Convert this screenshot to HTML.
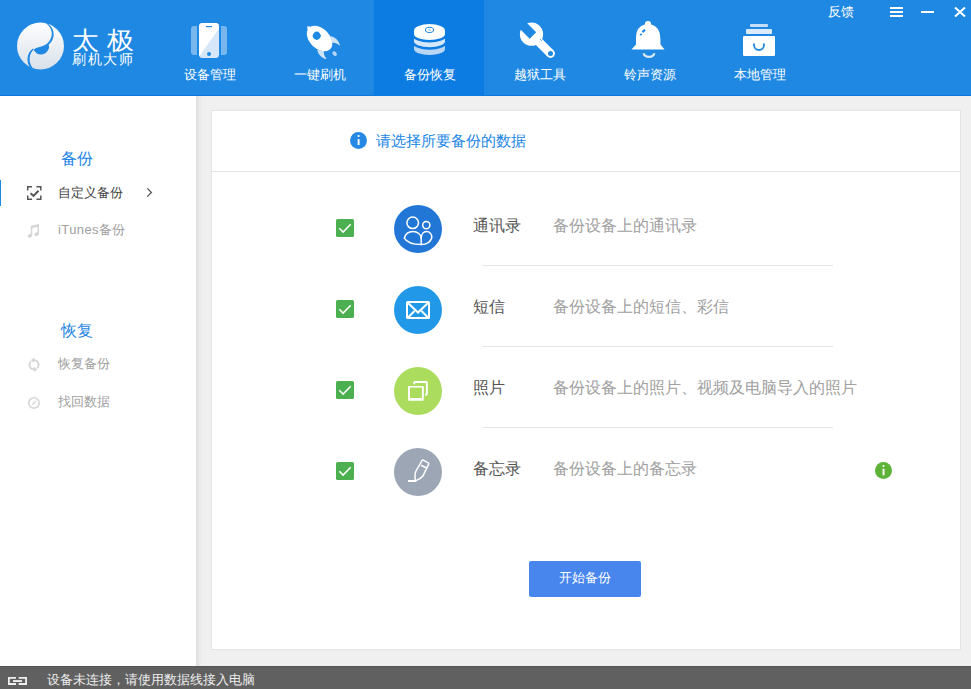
<!DOCTYPE html>
<html><head><meta charset="utf-8">
<style>
*{margin:0;padding:0;box-sizing:border-box}
html,body{width:971px;height:689px;overflow:hidden;background:#f0f0f0;font-family:"Liberation Sans",sans-serif}
.abs{position:absolute}
#hdr{position:absolute;left:0;top:0;width:971px;height:96px;background:#1e88e2;border-bottom:1px solid #0b7adc}
.tab{position:absolute;top:0;width:110px;height:95px}
.tab.act{background:#0c7ce2}
.tab .lbl{position:absolute;left:1px;width:110px;top:67px;text-align:center;color:#fff;font-size:13px;line-height:16px;white-space:nowrap}
.tab svg{position:absolute;left:0;top:0}
#side{position:absolute;left:0;top:96px;width:196px;height:570px;background:#fff}
#shadow{position:absolute;left:196px;top:96px;width:6px;height:570px;background:linear-gradient(to right,#dedede,#f0f0f0)}
#card{position:absolute;left:211px;top:110px;width:750px;height:540px;background:#fff;border:1px solid #e4e4e4}
.txt{position:absolute;white-space:nowrap;line-height:1}
#foot{position:absolute;left:0;top:666px;width:971px;height:23px;background:#606060;border-top:1px solid #555}
</style></head><body>
<div id="hdr">
  <!-- logo -->
  <svg class="abs" style="left:0;top:0" width="150" height="95" viewBox="0 0 150 95">
    <defs>
      <linearGradient id="lg" x1="0" y1="0" x2="0" y2="1">
        <stop offset="0" stop-color="#ffffff"/><stop offset="1" stop-color="#d8e0ea"/>
      </linearGradient>
    </defs>
    <circle cx="40.5" cy="46" r="23.5" fill="url(#lg)"/>
    <path d="M46.8 23 C51.5 25.5 54 30.5 53.6 35.5 C53.3 39.5 51.3 42.5 48.8 44.5 A8 8 0 0 1 33.2 48.5 C28.5 51.5 27.2 56.5 27.6 61 C28 64.5 29.5 67.3 31.7 69.2 L33.8 69.2 C31 66.5 29.6 63 29.6 59 C29.6 54.5 31.5 50.8 35 48.8 C38.5 46.8 44 46.5 47.2 43.5 C50 41 51.8 37.5 51.8 33.8 C51.8 29.5 49.5 25.5 45.5 23 Z" fill="#1e88e2"/>
  </svg>
  <div class="txt" style="left:72px;top:27.5px;color:#fff;font-size:25px;letter-spacing:7px;font-weight:300;transform:scaleX(1.08);transform-origin:0 0">太极</div>
  <div class="txt" style="left:72px;top:52px;color:#fff;font-size:14px;letter-spacing:1.6px">刷机大师</div>

  <div class="tab" style="left:154px"><div class="lbl">设备管理</div></div>
  <div class="tab" style="left:264px"><div class="lbl">一键刷机</div></div>
  <div class="tab act" style="left:374px"><div class="lbl">备份恢复</div></div>
  <div class="tab" style="left:484px"><div class="lbl">越狱工具</div></div>
  <div class="tab" style="left:594px"><div class="lbl">铃声资源</div></div>
  <div class="tab" style="left:704px"><div class="lbl">本地管理</div></div>

  <!-- header icons -->
  <svg class="abs" style="left:0;top:0" width="971" height="95" viewBox="0 0 971 95">
    <!-- phone -->
    <path d="M194 26 h3 v29 h-3 a3 3 0 0 1 -3 -3 v-23 a3 3 0 0 1 3 -3z" fill="#fff" fill-opacity="0.4"/>
    <path d="M221 26 h3 a3 3 0 0 1 3 3 v23 a3 3 0 0 1 -3 3 h-3z" fill="#fff" fill-opacity="0.4"/>
    <rect x="199" y="23" width="20" height="35" rx="3.5" fill="#d6e7f9"/>
    <path d="M202.5 23 h13 a3.5 3.5 0 0 1 3.5 3.5 v2 L199.5 56 a3.5 3.5 0 0 1 -0.5 -1.5 v-28 a3.5 3.5 0 0 1 3.5 -3.5z" fill="#fff"/>
    <rect x="206" y="26" width="6" height="1.2" fill="#1e88e2"/>
    <circle cx="209" cy="54" r="2" fill="#1e88e2"/>
    <!-- rocket -->
    <g transform="translate(321,40) rotate(-45)">
      <path d="M9.3 4 C12 7 12.5 13 9.5 17.5 C9 14 8 11.5 6 10 Z" fill="#cfe3f8"/>
      <path d="M-9.3 4 C-12 7 -12.5 13 -9.5 17.5 C-9 14 -8 11.5 -6 10 Z" fill="#cfe3f8"/>
      <ellipse cx="0" cy="19.3" rx="1.8" ry="2.6" fill="#b9d6f5"/>
      <ellipse cx="0" cy="-2" rx="10" ry="15" fill="#fff"/><path d="M0 -19.6 L2.4 -16.5 L-2.4 -16.5 Z" fill="#fff"/>
      <circle cx="0" cy="-6" r="3.9" fill="#1e88e2"/>
    </g>
    <!-- database -->
    <g stroke="#0c7ce2" stroke-width="5" paint-order="stroke" stroke-linejoin="round">
      <path d="M414 43 A15.5 6.4 0 0 1 445 43 V49 A15.5 6 0 0 1 414 49 Z" fill="#b9d6f5" stroke="none"/>
      <path d="M414 35.5 A15.5 6.4 0 0 1 445 35.5 V41.2 A15.5 6 0 0 1 414 41.2 Z" fill="#d5e7fa"/>
      <path d="M414 30.5 A15.5 6.4 0 0 1 445 30.5 V34 A15.5 6 0 0 1 414 34 Z" fill="#fff"/>
    </g>
    <ellipse cx="429.5" cy="29.9" rx="4.1" ry="2.6" fill="none" stroke="#0c7ce2" stroke-width="1"/>
    <path d="M428.5 29.3 L430.5 30.5" stroke="#0c7ce2" stroke-width="0.7"/>
    <!-- wrench -->
    <g fill="#fff">
      <circle cx="531.5" cy="34.2" r="11.6"/>
      <path d="M534.6 31.4 L553.6 50.4 L547.4 56.6 L528.4 37.6 Z"/>
      <circle cx="550.5" cy="53.5" r="4.4"/>
    </g>
    <path d="M536.2 32.3 L529.7 38.8 L515.5 24.6 L522 18.1 Z" fill="#1e88e2"/>
    <circle cx="550.5" cy="53.5" r="2.5" fill="#1e88e2"/>
    <path d="M540.2 39.2 L541.8 40.8" stroke="#1e88e2" stroke-width="0.8"/>
    <!-- bell -->
    <g fill="#fff">
      <ellipse cx="648" cy="24.3" rx="3.1" ry="3.3"/>
      <path d="M636 44.5 C636 36 636 31 639 28 C642 25 645 24 648 24 C651 24 654 25 657 28 C660 31 660.5 36 660.5 44.5 L664.5 49.5 L631.5 49.5 Z"/>
    </g>
    <path d="M641.6 31.3 L644.2 29 L645.8 30.6 L643.2 33 Z M639.5 34.5 L641 33.2 L642.2 34.5 L640.7 35.8 Z" fill="#1e88e2"/>
    <path d="M643.8 53.3 a5.2 3.6 0 0 0 10.4 0" fill="none" stroke="#d9e9fa" stroke-width="2.4"/>
    <!-- storage -->
    <rect x="750" y="24" width="18" height="3" rx="1" fill="#c6ddf6"/>
    <rect x="746" y="29" width="26" height="5" rx="1" fill="#dcebfb"/>
    <rect x="743" y="36" width="32" height="20" rx="1.2" fill="#fff"/>
    <path d="M754 43.5 v1.5 a5 5 0 0 0 10 0 v-1.5" fill="none" stroke="#1e88e2" stroke-width="1.8"/>
    <!-- window controls -->
    <rect x="890" y="7" width="13" height="2" fill="#fff"/>
    <rect x="890" y="11" width="13" height="2" fill="#fff"/>
    <rect x="890" y="15" width="13" height="2" fill="#fff"/>
    <rect x="921" y="11" width="13" height="2" fill="#fff"/>
    <path d="M955 7.5 L965 16.5 M965 7.5 L955 16.5" stroke="#fff" stroke-width="2"/>
  </svg>
  <div class="txt" style="left:828px;top:5px;color:#fff;font-size:13px">反馈</div>
</div>

<div id="side">
  <div class="abs" style="left:0;top:84px;width:1px;height:26px;background:#1e88e2"></div>
</div>
<div id="shadow"></div>
<div class="txt" style="left:61px;top:151px;color:#1c84e6;font-size:16px">备份</div>
<div class="txt" style="left:58px;top:186px;color:#444;font-size:13px">自定义备份</div>
<div class="txt" style="left:58px;top:223px;color:#a0a0a0;font-size:13px;letter-spacing:0.4px">iTunes备份</div>
<div class="txt" style="left:61px;top:323px;color:#1c84e6;font-size:16px">恢复</div>
<div class="txt" style="left:58px;top:357px;color:#a0a0a0;font-size:13px">恢复备份</div>
<div class="txt" style="left:58px;top:395px;color:#a0a0a0;font-size:13px">找回数据</div>
<svg class="abs" style="left:0;top:170px" width="196" height="250" viewBox="0 170 196 250">
  <path d="M27.7 190.5 v-3.8 h4.3 M36.5 186.7 h4.3 v3.8 M40.8 195.5 v3.8 h-4.3 M32 199.3 h-4.3 v-3.8" fill="none" stroke="#555" stroke-width="1.5"/>
  <path d="M30.6 193.2 L33.5 195.9 L38.5 190.8" fill="none" stroke="#555" stroke-width="2"/>
  <path d="M147.3 188.4 L151.4 192.5 L147.3 196.6" fill="none" stroke="#555" stroke-width="1.3"/>
  <!-- music note -->
  <path d="M30.8 225.8 L39 224 V226.6 L30.8 228.4 Z" fill="#d6d6d6"/>
  <rect x="30.8" y="226" width="1.5" height="9.8" fill="#d6d6d6"/>
  <rect x="37.5" y="224.5" width="1.5" height="9.6" fill="#d6d6d6"/>
  <ellipse cx="29.9" cy="235.8" rx="2.3" ry="1.8" transform="rotate(-25 29.9 235.8)" fill="#d6d6d6"/>
  <ellipse cx="36.6" cy="234.2" rx="2.3" ry="1.8" transform="rotate(-25 36.6 234.2)" fill="#d6d6d6"/>
  <!-- refresh -->
  <path d="M34 360.2 A4.6 4.6 0 0 1 37.1 368.2 M34 369.4 A4.6 4.6 0 0 1 30.9 361.4" fill="none" stroke="#d6d6d6" stroke-width="1.8"/>
  <path d="M30.6 360.2 L34.2 357.6 L34.2 362.8 Z M37.4 369.4 L33.8 366.8 L33.8 372 Z" fill="#d6d6d6"/>
  <!-- compass -->
  <circle cx="34" cy="403" r="5.2" fill="none" stroke="#d6d6d6" stroke-width="1.6"/>
  <path d="M31.8 405 L33.6 402.3 L36.2 400.8 L34.4 403.6 Z" fill="#d6d6d6" stroke="#d6d6d6" stroke-width="0.6"/>
</svg>

<div id="card">
  <div class="abs" style="left:0;top:60px;width:748px;height:1px;background:#e4e4e4"></div>
</div>
<svg class="abs" style="left:0;top:0" width="971" height="689" viewBox="0 0 971 689">
  <!-- info icon -->
  <circle cx="358.5" cy="140.5" r="8.45" fill="#2589e4"/>
  <rect x="357.65" y="139.1" width="1.9" height="5.9" fill="#fff"/>
  <rect x="357.65" y="135.1" width="1.9" height="1.8" fill="#fff"/>
  <!-- checkboxes -->
  <g>
    <rect x="336" y="219" width="18" height="18" rx="1.6" fill="#4caf50"/>
    <path d="M339.3 228.3 L343.1 232.1 L350.7 224.3" fill="none" stroke="#fff" stroke-width="1.5"/>
    <rect x="336" y="300" width="18" height="18" rx="1.6" fill="#4caf50"/>
    <path d="M339.3 309.3 L343.1 313.1 L350.7 305.3" fill="none" stroke="#fff" stroke-width="1.5"/>
    <rect x="336" y="381" width="18" height="18" rx="1.6" fill="#4caf50"/>
    <path d="M339.3 390.3 L343.1 394.1 L350.7 386.3" fill="none" stroke="#fff" stroke-width="1.5"/>
    <rect x="336" y="462" width="18" height="18" rx="1.6" fill="#4caf50"/>
    <path d="M339.3 471.3 L343.1 475.1 L350.7 467.3" fill="none" stroke="#fff" stroke-width="1.5"/>
  </g>
  <!-- circles -->
  <circle cx="418" cy="229" r="24" fill="#2277d6"/>
  <circle cx="418" cy="310" r="24" fill="#2299e8"/>
  <circle cx="418" cy="391" r="24" fill="#abdc5e"/>
  <circle cx="418" cy="472" r="24" fill="#9ca6b4"/>
  <!-- people -->
  <g fill="none" stroke="#fff" stroke-width="1.5">
    <circle cx="412.7" cy="222.8" r="5.8"/>
    <circle cx="426.3" cy="225.1" r="3.6"/>
    <path d="M404.3 238.2 C405.5 233.8 409 231.5 413 231.5 C417.5 231.5 421.2 234.5 421.2 238.5 V244.6 C413 244.6 406.5 241.8 404.3 238.2 Z"/>
    <path d="M421.2 238.5 C421.2 234.5 423.5 231.6 426.6 231.6 C429.6 231.6 431.8 234 431.8 236.8 C431.8 241 427 244.6 421.2 244.6"/>
  </g>
  <!-- envelope -->
  <g fill="none" stroke="#fff" stroke-width="2">
    <rect x="407" y="302" width="22" height="16" rx="0.5"/>
    <path d="M407.5 302.5 L418 312.5 L428.5 302.5"/>
    <path d="M408 317.5 L414.5 311 M428 317.5 L421.5 311"/>
  </g>
  <!-- photos -->
  <path d="M414.1 384.3 V382.9 Q414.1 382 415 382 H426 Q426.85 382 426.85 382.9 V393.9 Q426.85 394.75 426 394.75 H425.1" fill="none" stroke="#fff" stroke-width="1.95"/>
  <path fill-rule="evenodd" d="M408 387 Q408 385.9 409.1 385.9 H422.7 Q423.8 385.9 423.8 387 V399.7 Q423.8 400.8 422.7 400.8 H409.1 Q408 400.8 408 399.7 Z M410 387.5 V398.1 H421.9 V387.5 Z" fill="#fff"/>
  <!-- pencil -->
  <path d="M408 481 H416.4" fill="none" stroke="#fff" stroke-width="2"/>
  <g fill="none" stroke="#fff" stroke-width="1.5" stroke-linejoin="round">
    <path d="M415.2 480 C415 476.5 414.6 473.5 416 471 L422 460.6 C422.3 460.1 422.8 460 423.3 460.2 L428.3 462.9 C428.8 463.2 428.9 463.7 428.7 464.2 L423 475.8 C421.2 478.3 418.5 479.8 416 480.6"/>
    <path d="M421 465.2 L427.2 468.2"/>
  </g>
  <!-- green info -->
  <circle cx="883.5" cy="470.5" r="8.5" fill="#5cb338"/>
  <rect x="882.6" y="468.8" width="1.9" height="6.5" fill="#fff"/>
  <circle cx="883.5" cy="466" r="1.1" fill="#fff"/>
  <!-- dividers -->
  <rect x="483" y="265" width="350" height="1" fill="#e4e4e4"/>
  <rect x="483" y="346" width="350" height="1" fill="#e4e4e4"/>
  <rect x="483" y="427" width="350" height="1" fill="#e4e4e4"/>
  <!-- button -->
  <rect x="529" y="561" width="112" height="36" rx="2" fill="#4886ee"/>
  <!-- footer icon -->
</svg>
<div class="txt" style="left:376px;top:133px;color:#2085e6;font-size:15px">请选择所要备份的数据</div>
<div class="txt" style="left:473px;top:218px;color:#555;font-size:16px">通讯录</div>
<div class="txt" style="left:553px;top:218px;color:#a0a0a0;font-size:16px">备份设备上的通讯录</div>
<div class="txt" style="left:473px;top:299px;color:#555;font-size:16px">短信</div>
<div class="txt" style="left:553px;top:299px;color:#a0a0a0;font-size:16px">备份设备上的短信、彩信</div>
<div class="txt" style="left:473px;top:380px;color:#555;font-size:16px">照片</div>
<div class="txt" style="left:553px;top:380px;color:#a0a0a0;font-size:16px">备份设备上的照片、视频及电脑导入的照片</div>
<div class="txt" style="left:473px;top:461px;color:#555;font-size:16px">备忘录</div>
<div class="txt" style="left:553px;top:461px;color:#a0a0a0;font-size:16px">备份设备上的备忘录</div>
<div class="txt" style="left:559px;top:571px;color:#fff;font-size:13px">开始备份</div>

<div id="foot">
  <svg class="abs" style="left:0;top:-1px" width="40" height="23" viewBox="0 666 40 23">
    <path d="M16 677.8 H8.9 V684 H16 M18.7 677.8 H26.1 V684 H18.7" fill="none" stroke="#eee" stroke-width="1.8"/>
    <rect x="13" y="680.1" width="9" height="1.9" fill="#eee"/>
  </svg>
  <div class="txt" style="left:47px;top:6px;color:#eee;font-size:13px">设备未连接，请使用数据线接入电脑</div>
</div>
</body></html>
